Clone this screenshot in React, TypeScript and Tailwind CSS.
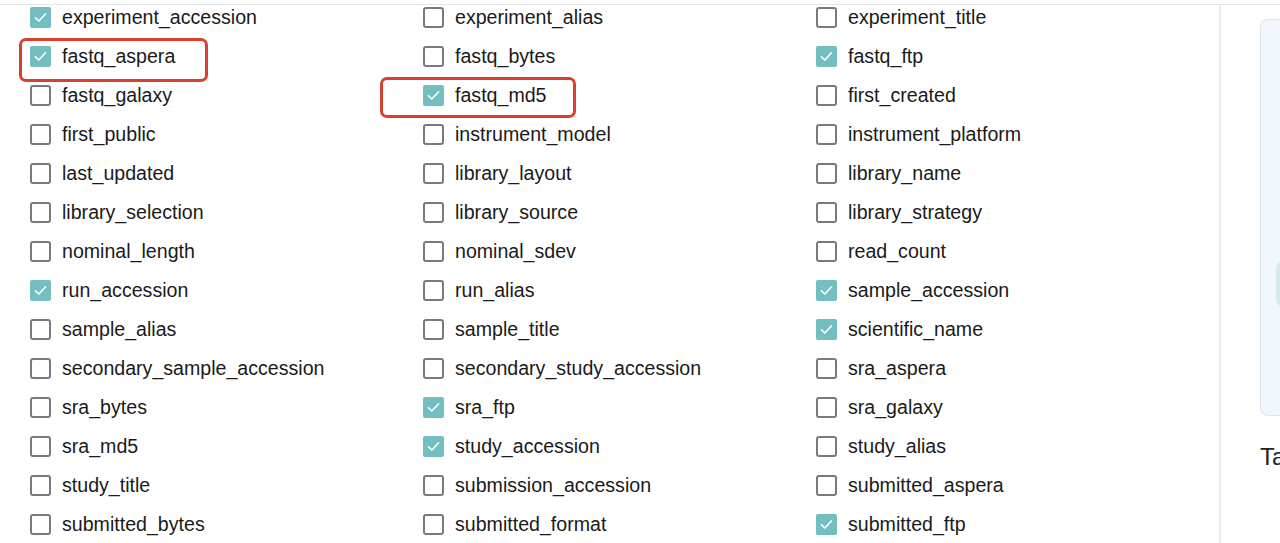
import React from "react";

const items: [string, boolean][] = [
  ["experiment_accession", true],
  ["experiment_alias", false],
  ["experiment_title", false],
  ["fastq_aspera", true],
  ["fastq_bytes", false],
  ["fastq_ftp", true],
  ["fastq_galaxy", false],
  ["fastq_md5", true],
  ["first_created", false],
  ["first_public", false],
  ["instrument_model", false],
  ["instrument_platform", false],
  ["last_updated", false],
  ["library_layout", false],
  ["library_name", false],
  ["library_selection", false],
  ["library_source", false],
  ["library_strategy", false],
  ["nominal_length", false],
  ["nominal_sdev", false],
  ["read_count", false],
  ["run_accession", true],
  ["run_alias", false],
  ["sample_accession", true],
  ["sample_alias", false],
  ["sample_title", false],
  ["scientific_name", true],
  ["secondary_sample_accession", false],
  ["secondary_study_accession", false],
  ["sra_aspera", false],
  ["sra_bytes", false],
  ["sra_ftp", true],
  ["sra_galaxy", false],
  ["sra_md5", false],
  ["study_accession", true],
  ["study_alias", false],
  ["study_title", false],
  ["submission_accession", false],
  ["submitted_aspera", false],
  ["submitted_bytes", false],
  ["submitted_format", false],
  ["submitted_ftp", true],
];

function Box({ checked }: { checked: boolean }) {
  if (checked) {
    return (
      <span className="flex h-[21px] w-[21px] shrink-0 items-center justify-center rounded-[2px] bg-[#72bec0]">
        <svg width="15" height="15" viewBox="0 0 14 14" fill="none">
          <path d="M2.3 7.3 L5.5 10.3 L11.7 3.5" stroke="white" strokeWidth="1.5" strokeLinecap="round" strokeLinejoin="round" />
        </svg>
      </span>
    );
  }
  return <span className="h-[21px] w-[21px] shrink-0 rounded-[3px] border-2 border-[#7a7a7a] bg-white" />;
}

export default function App() {
  return (
    <div className="relative h-[543px] w-[1280px] overflow-hidden bg-white font-['Liberation_Sans',Arial,sans-serif] text-[#1a1a1a]">
      <div className="h-[4px]" />
      <div className="flex h-[539px] border-t border-[#e4e4e4]">
        <div className="w-[1221px] shrink-0 border-r-2 border-[#ececec] pl-[30px]">
          <div className="grid grid-cols-[393px_393px_393px] gap-y-[15px]">
            {items.map(([label, checked]) => (
              <label key={label} className="flex h-[24px] items-center gap-[11px] text-[19.6px] leading-none">
                <Box checked={checked} />
                <span className="mt-[2px]">{label}</span>
              </label>
            ))}
          </div>
        </div>
        <div className="flex-1 pl-[39px] pt-[14px]">
          <div className="relative h-[397px] rounded-tl-[8px] rounded-bl-[8px] border border-r-0 border-[#dfe6ee] bg-[#f1f7fd]">
            <div className="absolute left-[15px] top-[242px] h-[44px] w-[10px] rounded-l-[6px] bg-[#d5eaee]" />
          </div>
          <div className="mt-[29px] text-[24px] leading-none text-[#222]">Ta</div>
        </div>
      </div>
      <div className="pointer-events-none absolute left-[19px] top-[38px] h-[44px] w-[189px] rounded-[7px] border-[3px] border-[#d8412d]" />
      <div className="pointer-events-none absolute left-[380px] top-[77px] h-[41px] w-[196px] rounded-[7px] border-[3px] border-[#d8412d]" />
    </div>
  );
}
